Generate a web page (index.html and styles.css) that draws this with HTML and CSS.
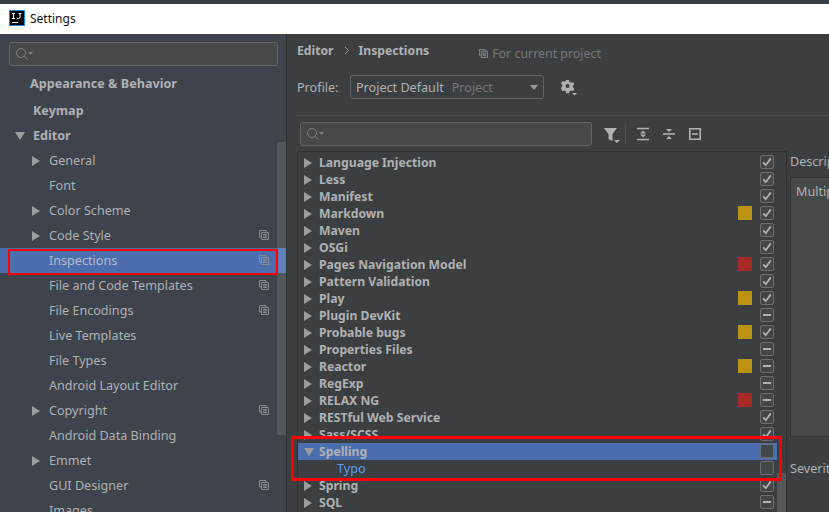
FILE: index.html
```html
<!DOCTYPE html>
<html>
  <head>
    <title>Settings</title>
    <link rel="stylesheet" href="styles.css">
  </head>
  <body>
    <svg class="defs" width="0" height="0">
      <symbol id="copy" viewBox="0 0 10 10">
        <path d="M0.5 0.5h6.5v1.5M0.5 0.5v6.5h1.5M2.5 2.5h7v7h-7zM4 4.5h4M4 6h4M4 7.5h4" fill="none" stroke="currentColor"/>
      </symbol>
      <symbol id="check" viewBox="0 0 14 14">
        <path d="M3.2 7.4l2.6 2.8 5-6.8" fill="none" stroke="#afb1b3" stroke-width="1.8"/>
      </symbol>
      <symbol id="search" viewBox="0 0 18 14">
        <circle cx="6" cy="6" r="4.5" fill="none" stroke="#7d8082"/>
        <path d="M9.4 9.4l3.4 3.4" stroke="#7d8082" fill="none"/>
        <path d="M13 5h5l-2.5 3z" fill="#7d8082"/>
      </symbol>
    </svg>

    <div class="titlebar">
      <svg class="logo" width="16" height="16" viewBox="0 0 16 16">
        <rect x="0.5" y="0.5" width="15" height="15" fill="#000" stroke="#1e88e5"/>
        <path d="M3 3.5h3M4.5 3.5v5M3 8.500h3M8 8.500h1.500q1.500 0 1.500-1.500v-3.500M9.500 3.500h3M3 12.500h6" fill="none" stroke="#fff" stroke-width="1"/>
      </svg>
      <span>Settings</span>
    </div>

    <div class="window">
      <div class="sidebar">
        <div class="searchbox side-search">
          <svg width="18" height="14"><use href="#search"/></svg>
        </div>
        <div class="navwrap">
          <div class="nav">
            <div class="nav-item bold first">Appearance &amp; Behavior</div>
            <div class="nav-item bold keymap">Keymap</div>
            <div class="nav-item bold editor"><i class="arrow down"></i>Editor</div>
            <div class="nav-item sub"><i class="arrow"></i>General</div>
            <div class="nav-item sub">Font</div>
            <div class="nav-item sub"><i class="arrow"></i>Color Scheme</div>
            <div class="nav-item sub"><i class="arrow"></i>Code Style<svg class="copy"><use href="#copy"/></svg></div>
            <div class="nav-item sub selected">Inspections<svg class="copy"><use href="#copy"/></svg></div>
            <div class="nav-item sub">File and Code Templates<svg class="copy"><use href="#copy"/></svg></div>
            <div class="nav-item sub">File Encodings<svg class="copy"><use href="#copy"/></svg></div>
            <div class="nav-item sub">Live Templates</div>
            <div class="nav-item sub">File Types</div>
            <div class="nav-item sub">Android Layout Editor</div>
            <div class="nav-item sub"><i class="arrow"></i>Copyright<svg class="copy"><use href="#copy"/></svg></div>
            <div class="nav-item sub">Android Data Binding</div>
            <div class="nav-item sub"><i class="arrow"></i>Emmet</div>
            <div class="nav-item sub">GUI Designer<svg class="copy"><use href="#copy"/></svg></div>
            <div class="nav-item sub">Images</div>
          </div>
          <div class="side-scroll"></div>
        </div>
      </div>

      <div class="main">
        <div class="crumbs">
          <b>Editor</b>
          <svg class="chevron" width="6" height="9" viewBox="0 0 6 9"><path d="M1 1l3.500 3.500L1 8" fill="none" stroke="#9a9c9e"/></svg>
          <b>Inspections</b>
          <span class="scope"><svg class="copy small"><use href="#copy"/></svg>For current project</span>
        </div>

        <div class="profile">
          <span class="profile-label">Profile:</span>
          <div class="combo">
            <span>Project Default</span>
            <span class="muted">Project</span>
            <i class="caret"></i>
          </div>
          <svg class="gear" width="17" height="17" viewBox="0 0 17 17">
            <path d="M6.500 1h3l.5 2 1.700.9 1.900-.8 1.500 2.600-1.500 1.400v1.800l1.500 1.400-1.500 2.600-1.900-.8-1.700.9-.5 2H6.500l-.5-2-1.700-.9-1.900.8L.9 9.300l1.500-1.400V6.100L.9 4.700l1.500-2.600 1.900.8L6 2z" transform="translate(-1 0) scale(.95)" fill="#afb1b3"/>
            <circle cx="6.600" cy="7" r="2" fill="#3c3f41"/>
            <path d="M11 14h5l-2.500 2.500z" fill="#afb1b3"/>
          </svg>
        </div>

        <div class="rule"></div>

        <div class="toolbar">
          <div class="searchbox tree-search">
            <svg width="18" height="14"><use href="#search"/></svg>
          </div>
          <svg class="tool filter" width="18" height="18" viewBox="0 0 18 18">
            <path d="M1 2h13L9.500 8v7l-4-2V8z" fill="#afb1b3"/>
            <path d="M11 14h6l-3 3z" fill="#afb1b3"/>
          </svg>
          <div class="tool-sep"></div>
          <svg class="tool" width="14" height="14" viewBox="0 0 14 14">
            <path d="M1 1.500h12M1 12.500h12" stroke="#afb1b3" stroke-width="1.600"/>
            <path d="M7 3.500l3 3H4zM7 10.500l3-3H4z" fill="#afb1b3"/>
          </svg>
          <svg class="tool" width="14" height="14" viewBox="0 0 14 14">
            <path d="M1 7h12" stroke="#afb1b3" stroke-width="1.600"/>
            <path d="M7 5L4 2h6zM7 9l3 3H4z" fill="#afb1b3"/>
          </svg>
          <svg class="tool" width="14" height="14" viewBox="0 0 14 14">
            <path d="M1.800 1.800h10.400v10.400H1.800z" fill="none" stroke="#afb1b3" stroke-width="1.600"/>
            <path d="M4 7h6" stroke="#afb1b3" stroke-width="1.600"/>
          </svg>
        </div>

        <div class="split">
          <div class="tree">
            <div class="row"><i class="arrow"></i><span class="name">Language Injection</span><span class="box"><svg><use href="#check"/></svg></span></div>
            <div class="row"><i class="arrow"></i><span class="name">Less</span><span class="box"><svg><use href="#check"/></svg></span></div>
            <div class="row"><i class="arrow"></i><span class="name">Manifest</span><span class="box"><svg><use href="#check"/></svg></span></div>
            <div class="row"><i class="arrow"></i><span class="name">Markdown</span><span class="sev warn"></span><span class="box"><svg><use href="#check"/></svg></span></div>
            <div class="row"><i class="arrow"></i><span class="name">Maven</span><span class="box"><svg><use href="#check"/></svg></span></div>
            <div class="row"><i class="arrow"></i><span class="name">OSGi</span><span class="box"><svg><use href="#check"/></svg></span></div>
            <div class="row"><i class="arrow"></i><span class="name">Pages Navigation Model</span><span class="sev err"></span><span class="box"><svg><use href="#check"/></svg></span></div>
            <div class="row"><i class="arrow"></i><span class="name">Pattern Validation</span><span class="box"><svg><use href="#check"/></svg></span></div>
            <div class="row"><i class="arrow"></i><span class="name">Play</span><span class="sev warn"></span><span class="box"><svg><use href="#check"/></svg></span></div>
            <div class="row"><i class="arrow"></i><span class="name">Plugin DevKit</span><span class="box"><i class="dash"></i></span></div>
            <div class="row"><i class="arrow"></i><span class="name">Probable bugs</span><span class="sev warn"></span><span class="box"><svg><use href="#check"/></svg></span></div>
            <div class="row"><i class="arrow"></i><span class="name">Properties Files</span><span class="box"><i class="dash"></i></span></div>
            <div class="row"><i class="arrow"></i><span class="name">Reactor</span><span class="sev warn"></span><span class="box"><i class="dash"></i></span></div>
            <div class="row"><i class="arrow"></i><span class="name">RegExp</span><span class="box"><i class="dash"></i></span></div>
            <div class="row"><i class="arrow"></i><span class="name">RELAX NG</span><span class="sev err"></span><span class="box"><i class="dash"></i></span></div>
            <div class="row"><i class="arrow"></i><span class="name">RESTful Web Service</span><span class="box"><svg><use href="#check"/></svg></span></div>
            <div class="row"><i class="arrow"></i><span class="name">Sass/SCSS</span><span class="box"><svg><use href="#check"/></svg></span></div>
            <div class="row active"><i class="arrow down"></i><span class="name">Spelling</span><span class="box"></span></div>
            <div class="row"><span class="name child">Typo</span><span class="box"></span></div>
            <div class="row"><i class="arrow"></i><span class="name">Spring</span><span class="box"><svg><use href="#check"/></svg></span></div>
            <div class="row"><i class="arrow"></i><span class="name">SQL</span><span class="box"><i class="dash"></i></span></div>
            <div class="tree-scroll"></div>
          </div>
          <div class="details">
            <div class="det-label">Description</div>
            <div class="det-box">Multiple</div>
            <div class="det-label severity">Severity:</div>
          </div>
        </div>
      </div>
    </div>

    <div class="mark mark-nav"></div>
    <div class="mark mark-tree"></div>
  </body>
</html>
```
FILE: styles.css
```css
* {
  box-sizing: border-box;
}

body {
  margin: 0;
  height: 512px;
  overflow: hidden;
  display: flex;
  flex-direction: column;
  padding-top: 4px;
  background-color: #3c3f41;
  color: #afb1b3;
  font-family: "Noto Sans", sans-serif;
  font-size: 12.6px;
}

.defs {
  position: absolute;
}

.titlebar {
  height: 30px;
  flex: none;
  display: flex;
  align-items: center;
  gap: 5px;
  padding: 0 0 2px 9px;
  background-color: #fff;
  color: #111;
  font-size: 12px;
}

.window {
  height: 478px;
  flex: none;
  display: flex;
  overflow: hidden;
}

/* left settings tree */
.sidebar {
  width: 287px;
  flex: none;
  padding-top: 8px;
  background-color: #3e434c;
  border-right: 1px solid #303234;
  overflow: hidden;
}

.searchbox {
  height: 24px;
  display: flex;
  align-items: center;
  padding-left: 5px;
  background-color: #45494a;
  border: 1px solid #646464;
  border-radius: 3px;
}

.side-search {
  margin-left: 9px;
  width: 269px;
}

.navwrap {
  display: flex;
  position: relative;
  margin-top: 5px;
}

.nav {
  flex: 1;
}

.nav-item {
  height: 25px;
  display: flex;
  align-items: center;
  position: relative;
  padding-left: 49px;
  padding-bottom: 1px;
  color: #afb1b3;
  white-space: nowrap;
}

.nav-item.bold {
  font-weight: bold;
  padding-left: 33px;
}

.nav-item.first {
  padding-left: 30px;
}

.nav-item.keymap {
  margin-top: 2px;
}

.nav-item.selected {
  background-color: #4b6eaf;
  box-shadow: 9px 0 0 #5f7fb8;
  color: #b4bcc8;
}

.nav-item .arrow {
  left: 32px;
}

.nav-item.editor .arrow {
  left: 15px;
}

.copy {
  position: absolute;
  right: 8px;
  top: 7px;
  width: 10px;
  height: 10px;
  color: #8a8d90;
}

.copy.small {
  position: static;
  width: 9px;
  height: 9px;
  margin-right: 4px;
}

.side-scroll {
  width: 9px;
  flex: none;
  height: 293px;
  margin-top: 71px;
  background-color: #53565a;
}

/* tree triangles */
.arrow {
  position: absolute;
  left: 6px;
  top: 50%;
  margin-top: -5px;
  width: 0;
  height: 0;
  border-style: solid;
  border-width: 5px 0 5px 8px;
  border-color: transparent transparent transparent #9a9c9e;
}

.arrow.down {
  margin-top: -4px;
  border-width: 8px 5px 0 5px;
  border-color: #9a9c9e transparent transparent transparent;
}

/* right panel */
.main {
  flex: 1;
  min-width: 0;
  padding-left: 10px;
}

.crumbs {
  height: 32px;
  display: flex;
  align-items: center;
  font-size: 12.2px;
}

.chevron {
  margin: 0 9px 0 10px;
}

.scope {
  display: flex;
  align-items: center;
  margin-left: 50px;
  padding-top: 6px;
  font-size: 12.4px;
  color: #75787b;
}

.profile {
  height: 24px;
  margin-top: 9px;
  display: flex;
  align-items: center;
}

.profile-label {
  width: 53px;
}

.combo {
  width: 194px;
  height: 24px;
  display: flex;
  align-items: center;
  gap: 8px;
  padding-left: 5px;
  position: relative;
  border: 1px solid #646464;
  border-radius: 3px;
}

.muted {
  color: #75787b;
}

.caret {
  position: absolute;
  right: 5px;
  top: 9px;
  border-style: solid;
  border-width: 5px 4.5px 0 4.5px;
  border-color: #9a9c9e transparent transparent transparent;
}

.gear {
  margin-left: 17px;
}

.rule {
  height: 1px;
  margin-top: 16px;
  background-color: #4d5052;
}

.toolbar {
  height: 24px;
  margin: 6px 0 0 3px;
  display: flex;
  align-items: center;
}

.tree-search {
  width: 292px;
}

.tool {
  margin-left: 12px;
}

.tool.filter {
  margin-left: 11px;
  margin-top: 2px;
}

.tool-sep {
  width: 1px;
  height: 20px;
  margin-left: 4px;
  margin-right: -2px;
  background-color: #4d5052;
}

.split {
  display: flex;
  margin-top: 5px;
}

.tree {
  width: 490px;
  height: 361px;
  flex: none;
  position: relative;
  padding-top: 2px;
  border: 1px solid #323232;
  border-width: 1px 1px 0 1px;
}

.row {
  height: 17px;
  display: flex;
  align-items: center;
  position: relative;
  width: 479px;
  padding-left: 21px;
  white-space: nowrap;
}

.row.active {
  background-color: #4b6eaf;
}

.name {
  flex: 1;
  font-size: 12.2px;
  font-weight: bold;
  padding-bottom: 1px;
  color: #afb1b3;
}

.name.child {
  padding-left: 18px;
  font-size: 12.6px;
  font-weight: normal;
  color: #589df6;
}

.sev {
  width: 14px;
  height: 14px;
  margin: 0 8px 1px 0;
}

.warn {
  background-color: #bc9212;
}

.err {
  background-color: #a42a26;
}

.box {
  width: 14px;
  height: 14px;
  margin: 0 3px 1px 0;
  display: flex;
  align-items: center;
  justify-content: center;
  background-color: #43474a;
  border: 1px solid #6b6e70;
  border-radius: 2px;
}

.box svg {
  width: 14px;
  height: 14px;
  flex: none;
}

.dash {
  width: 8px;
  height: 2px;
  background-color: #afb1b3;
}

.tree-scroll {
  position: absolute;
  right: 0;
  top: 321px;
  width: 9px;
  height: 40px;
  background-color: #54585a;
}

.details {
  flex: 1;
  min-width: 0;
  padding-left: 3px;
  overflow: hidden;
  white-space: nowrap;
}

.det-label {
  height: 21px;
  padding-top: 2px;
  color: #afb1b3;
}

.det-box {
  height: 260px;
  margin-top: 5px;
  padding: 5px 0 0 5px;
  width: 60px;
  background-color: #45494a;
  border: 1px solid #323232;
  border-right: 0;
}

.severity {
  margin-top: 21px;
}

/* red annotation boxes drawn over the screenshot */
.mark {
  position: absolute;
  border: 2px solid #f00;
}

.mark-nav {
  left: 8px;
  top: 249px;
  width: 270px;
  height: 26px;
}

.mark-tree {
  left: 291px;
  top: 436px;
  width: 491px;
  height: 45px;
  border-width: 3px;
}
```
